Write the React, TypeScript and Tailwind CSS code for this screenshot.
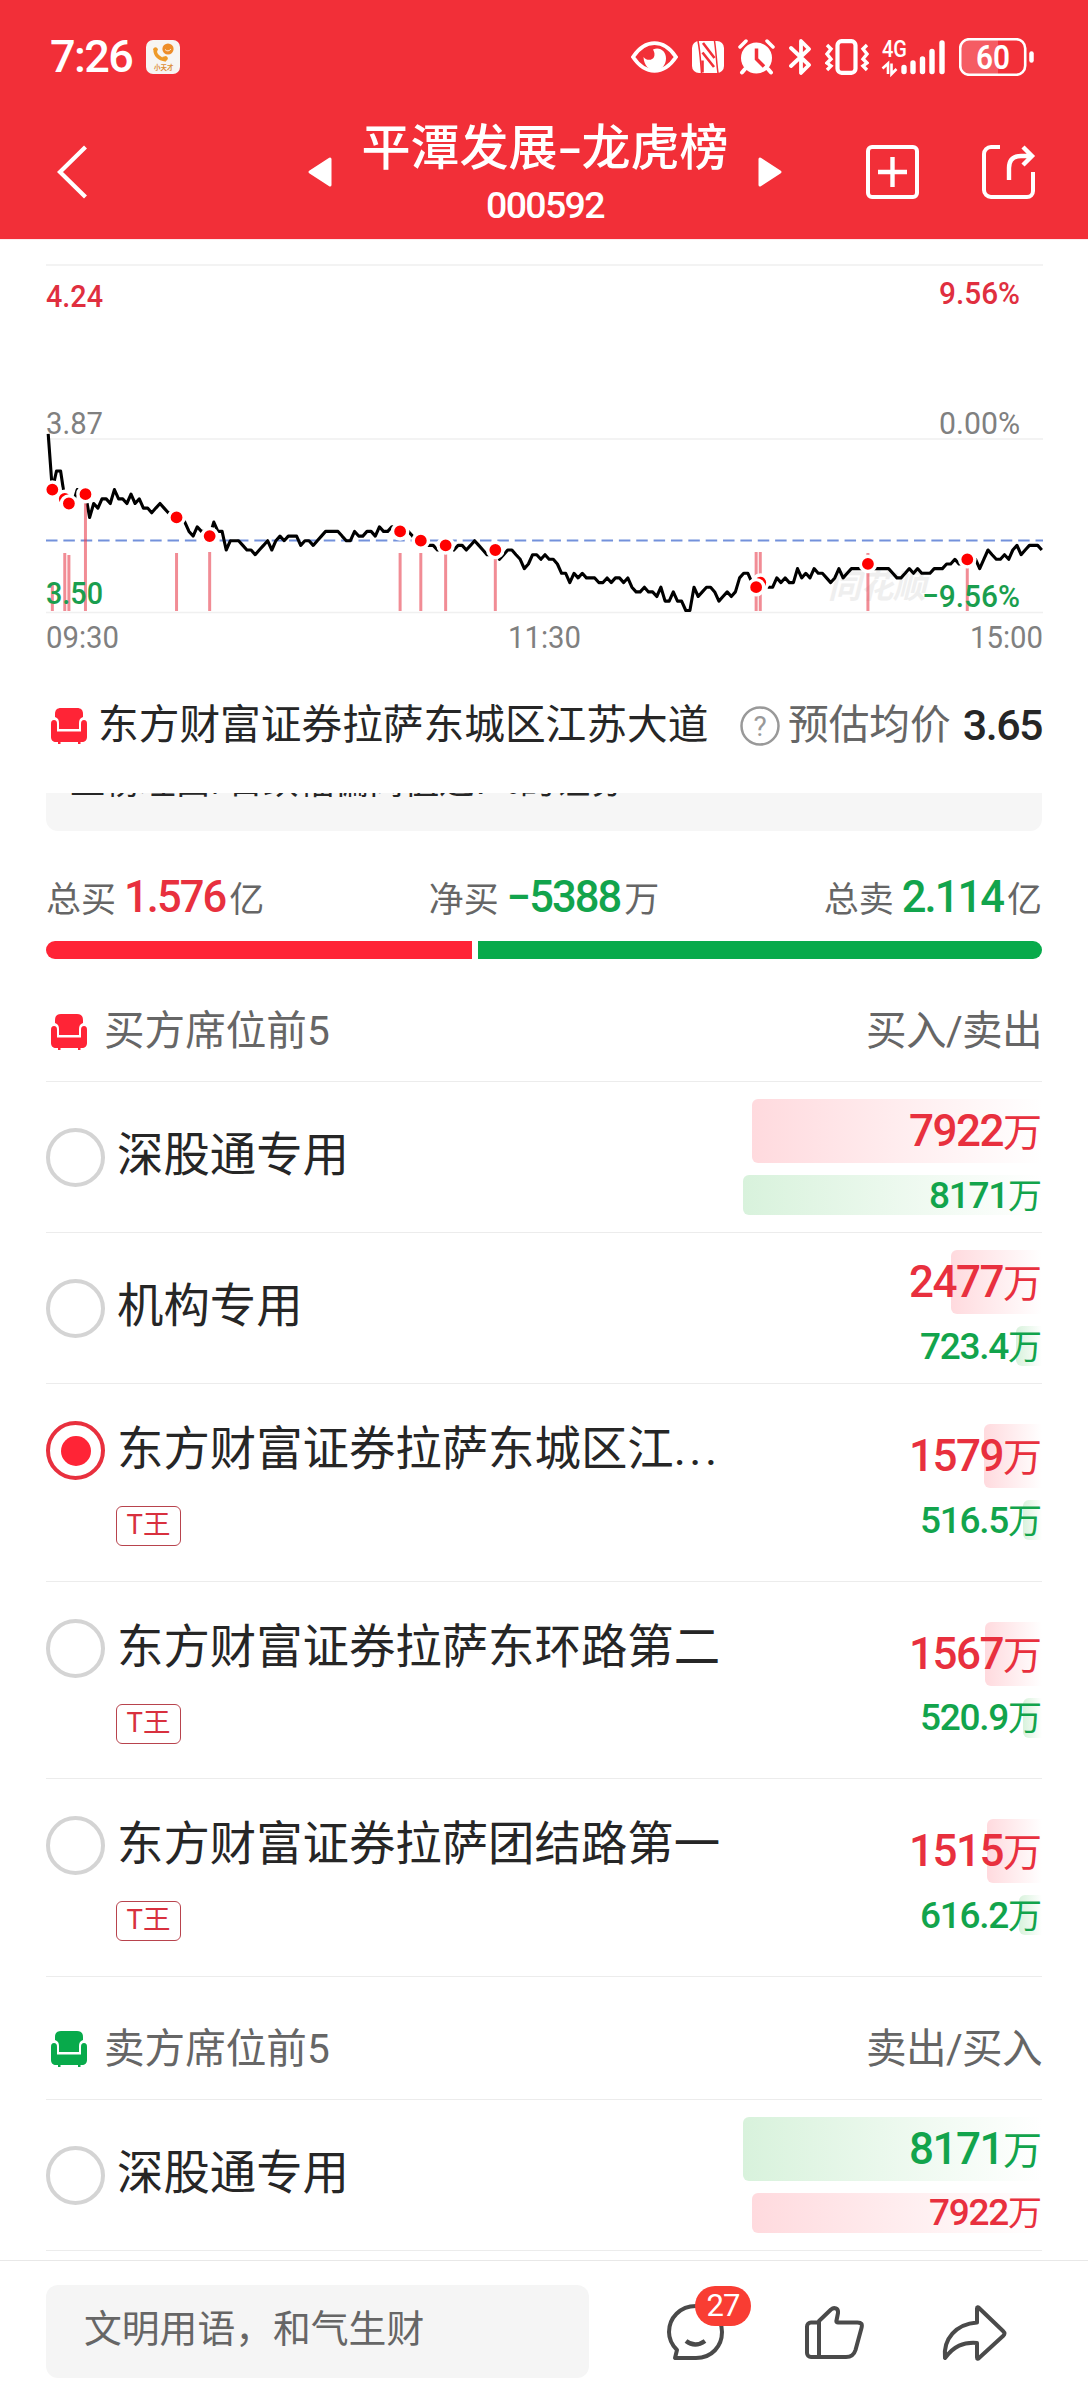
import clsx from "clsx";

type Seat = {
  name: string;
  top: number;
  bottom: number;
  topText: string;
  bottomText: string;
  tag?: string;
  more?: boolean;
  selected?: boolean;
};

const BUY_SEATS: Seat[] = [
  { name: "深股通专用", top: 7922, bottom: 8171, topText: "7922", bottomText: "8171" },
  { name: "机构专用", top: 2477, bottom: 723.4, topText: "2477", bottomText: "723.4" },
  {
    name: "东方财富证券拉萨东城区江",
    top: 1579,
    bottom: 516.5,
    topText: "1579",
    bottomText: "516.5",
    tag: "T王",
    more: true,
    selected: true,
  },
  { name: "东方财富证券拉萨东环路第二", top: 1567, bottom: 520.9, topText: "1567", bottomText: "520.9", tag: "T王" },
  { name: "东方财富证券拉萨团结路第一", top: 1515, bottom: 616.2, topText: "1515", bottomText: "616.2", tag: "T王" },
];

const SELL_SEATS: Seat[] = [
  { name: "深股通专用", top: 8171, bottom: 7922, topText: "8171", bottomText: "7922" },
];

const MAX_AMOUNT = 8171;
const MAX_BAR = 299;

// one value per minute, in cents below the previous close of 3.87
const TICKS = [
  -1, 11, 7, 7, 13, 14, 14, 11, 11, 12, 17, 14, 15, 13, 13, 14, 11, 13, 13, 14, 12, 14, 13, 15, 15, 16, 15, 14, 15, 16,
  16, 17, 17, 18, 20, 21, 19, 20, 20, 21, 18, 20, 20, 24, 22, 22, 22, 23, 24, 24, 25, 24, 23, 22, 24, 22, 21, 22, 21, 21,
  21, 23, 22, 22, 23, 22, 21, 20, 20, 20, 20, 21, 22, 22, 20, 21, 21, 20, 20, 21, 19, 20, 20, 19, 19, 20, 20, 20, 21, 22,
  22, 23, 23, 23, 24, 24, 23, 23, 24, 23, 23, 24, 23, 22, 23, 24, 25, 25, 24, 26, 25, 24, 24, 25, 26, 28, 27, 25, 25, 26,
  25, 26, 26, 27, 29, 29, 31, 29, 30, 29, 30, 30, 30, 31, 31, 30, 31, 30, 30, 31, 30, 32, 33, 33, 32, 33, 33, 34, 32, 35,
  35, 33, 35, 35, 37, 37, 32, 34, 33, 32, 32, 33, 35, 34, 33, 34, 33, 30, 29, 29, 31, 32, 31, 31, 32, 32, 30, 31, 30, 31,
  31, 28, 30, 29, 30, 28, 29, 29, 30, 31, 30, 28, 30, 29, 28, 28, 28, 28, 27, 28, 28, 28, 28, 28, 29, 30, 30, 29, 28, 29,
  28, 29, 29, 29, 28, 28, 28, 27, 27, 26, 27, 27, 26, 26, 26, 28, 26, 24, 25, 26, 26, 25, 26, 24, 23, 25, 24, 23, 23, 23,
  24,
];

const MARKS = [
  { at: 1, top: 343 },
  { at: 4, top: 313 },
  { at: 5, top: 315 },
  { at: 9, top: 250 },
  { at: 31, top: 313 },
  { at: 39, top: 312 },
  { at: 85, top: 313 },
  { at: 90, top: 313 },
  { at: 96, top: 314 },
  { at: 108, top: 318 },
  { at: 172, top: 312 },
  { at: 171, top: 312 },
  { at: 198, top: 313 },
  { at: 222, top: 318 },
];

const px = (i: number) => 48.2 + i * 4.14;
const py = (n: number) => 198.4 + n * 4.65;

function StatusBar() {
  return (
    <div className="flex h-[113px] items-center pl-[50px] pr-[53px] text-white">
      <span className="text-[45px] font-medium leading-none tracking-[-0.035em]">7:26</span>
      <svg className="ml-3.5" width="34" height="34" viewBox="0 0 34 34">
        <rect width="34" height="34" rx="7" fill="#f7f5f3" />
        <circle cx="22" cy="9" r="5.6" fill="#ee8d2a" />
        <path d="M19 9.5q3 3 6-.5" stroke="#fff" strokeWidth="0.8" fill="none" />
        <path d="M9 9c0 6 4 10 11 11" stroke="#ee9a2a" strokeWidth="3.4" fill="none" />
        <path d="M7 9.500c1-3 4-3 5 0l-1 2M16 17l4-1c2 1 3 3 0 5" fill="#ee9a2a" />
        <text x="8" y="29.500" fontSize="6.500" fontWeight="700" fill="#dc8d35">
          小天才
        </text>
      </svg>

      <div className="ml-auto flex items-center">
        <svg width="47" height="32" viewBox="0 0 47 32" fill="none">
          <path d="M2 16C8 7 15 2.200 23.500 2.200S39 7 45 16c-6 9-13 13.800-21.500 13.800S8 25 2 16Z" stroke="#fff" strokeWidth="3.800" />
          <path d="M22 8.500c7-3 13 2 13 9 0 7-5 11.500-11 11.500S13 25 12.500 16c3 4 9 3.500 10.500 0 1-2.500.5-5-1-7.500Z" fill="#fff" />
        </svg>
        <svg className="ml-3.5" width="32" height="34" viewBox="0 0 32 34" fill="none">
          <rect y="1" width="32" height="32" rx="7" fill="#fff" />
          <path d="M6 1c2 9 2.500 20 3.500 32M22.500 1c1.500 9 2 22 3.500 32" stroke="#f22f38" strokeWidth="1.500" />
          <path d="M11 3l11.500 15M10.500 12.500L22 27M10.500 20.500v12" stroke="#f22f38" strokeWidth="2.600" />
        </svg>
        <svg className="ml-3.5" width="37" height="36" viewBox="0 0 37 36" fill="none">
          <circle cx="18.500" cy="19" r="15.500" fill="#fff" />
          <path d="M2 8l6-6M35 8l-6-6" stroke="#fff" strokeWidth="3.500" strokeLinecap="round" />
          <path d="M7 30l-3 3.500M30 30l3 3.500" stroke="#fff" strokeWidth="4" strokeLinecap="round" />
          <path d="M18.500 9.500V20l7.500 7.500" stroke="#f22f38" strokeWidth="3.500" />
        </svg>
        <svg className="ml-3.5" width="23" height="36" viewBox="0 0 23 36" fill="none">
          <path d="M2 9l18 17-8 8V2l8 8L2 27" stroke="#fff" strokeWidth="3.800" strokeLinejoin="round" strokeLinecap="round" />
        </svg>
        <svg className="ml-[13px]" width="44" height="36" viewBox="0 0 44 36" fill="none">
          <rect x="12.500" y="2.200" width="18" height="31.600" rx="4" stroke="#fff" strokeWidth="4.200" />
          <path d="M2 6l4 4-4 5 4 5-4 4 4 3-4 4M42 6l-4 4 4 5-4 5 4 4-4 3 4 4" stroke="#fff" strokeWidth="3.400" />
        </svg>
        <svg className="ml-[13px] overflow-visible" width="64" height="36" viewBox="0 0 64 36" fill="none">
          <text x="0" y="18" fontSize="23" fontWeight="500" fill="#fff" textLength="25" lengthAdjust="spacingAndGlyphs">
            4G
          </text>
          <path d="M6 35V24.500L.5 29.500M9.500 24.500V35l5-5" stroke="#fff" strokeWidth="2.600" />
          <path d="M22 28.500v4M31 24v8.500M40.500 20v12.500M50 12.500v20M60 4v28.500" stroke="#fff" strokeWidth="5.400" strokeLinecap="round" />
        </svg>
        <svg className="ml-[13px]" width="76" height="38" viewBox="0 0 76 38" fill="none">
          <path d="M10 2h29v34H10a8 8 0 0 1-8-8V10a8 8 0 0 1 8-8Z" fill="#fff" fillOpacity=".22" />
          <rect x="1.200" y="1.200" width="65" height="35.600" rx="9" stroke="#fff" strokeWidth="2.600" />
          <path d="M72.500 15.500v7" stroke="#fff" strokeWidth="4.500" strokeLinecap="round" />
          <text x="17" y="30.500" fontSize="33" fontWeight="600" fill="#fff" textLength="34" lengthAdjust="spacingAndGlyphs">
            60
          </text>
        </svg>
      </div>
    </div>
  );
}

function NavBar() {
  return (
    <div className="flex h-[118px] items-center pl-14 pr-[52px] text-white">
      <svg width="32" height="56" viewBox="0 0 32 56" fill="none">
        <path d="M29.500 3L4 28l25.500 25" stroke="#fff" strokeWidth="4.200" />
      </svg>
      <svg className="ml-[220px]" width="24" height="30" viewBox="0 0 24 30">
        <path d="M22 2v26L2 15Z" fill="#fff" stroke="#fff" strokeWidth="3" strokeLinejoin="round" />
      </svg>
      <div className="flex h-[118px] w-[426px] flex-col items-center">
        <div className="flex h-[70px] items-center text-[49px] font-medium leading-none">
          平潭发展<span className="w-6 scale-x-150 text-center">-</span>龙虎榜
        </div>
        <div className="text-[37.500px] font-medium leading-[44px] tracking-[-0.045em]">000592</div>
      </div>
      <svg width="24" height="30" viewBox="0 0 24 30">
        <path d="M2 2v26l20-13Z" fill="#fff" stroke="#fff" strokeWidth="3" strokeLinejoin="round" />
      </svg>
      <svg className="ml-auto" width="54" height="54" viewBox="0 0 54 54" fill="none">
        <rect x="2" y="2" width="49" height="50" rx="4" stroke="#fff" strokeWidth="4" />
        <path d="M26.500 12v30M12 27h29" stroke="#fff" strokeWidth="4.400" />
      </svg>
      <svg className="ml-[62px]" width="54" height="54" viewBox="0 0 54 54" fill="none">
        <path d="M18 2H9a7 7 0 0 0-7 7v36a7 7 0 0 0 7 7h36a6 6 0 0 0 6-6V27" stroke="#fff" strokeWidth="4" />
        <path d="M27 35V23c0-8 4-12 12-12h10M41 2l9 9-9 9" stroke="#fff" strokeWidth="4.400" />
      </svg>
    </div>
  );
}

function PriceChart() {
  const line = TICKS.map((n, i) => `${px(i).toFixed(1)},${py(n).toFixed(1)}`).join(" ");
  return (
    <svg className="block" width="1088" height="420" viewBox="0 0 1088 420" fontSize="32">
      <path d="M46 25h997M46 199h997M46 372.500h997" stroke="#f0f0f0" strokeWidth="1.500" />
      <text x="828" y="358" fontSize="33" fontWeight="700" fontStyle="italic" fill="#efefef" textLength="98">
        同花顺
      </text>
      <path d="M46 300.500h997" stroke="#7391db" strokeWidth="2.200" strokeDasharray="11.500 5.860" />
      <polyline points={line} fill="none" stroke="#000" strokeWidth="3.100" strokeLinejoin="round" />
      {MARKS.map((m) => (
        <path key={m.at} d={`M${px(m.at)} ${m.top}V371`} stroke="#e8404e" strokeOpacity=".6" strokeWidth="3" />
      ))}
      {MARKS.map((m) => (
        <circle key={m.at} cx={px(m.at)} cy={py(TICKS[m.at])} r="7.600" fill="#f00" stroke="#fff" strokeWidth="3.400" />
      ))}
      <g fill="#e02f3f" fontWeight="500">
        <text x="46" y="67" textLength="57" lengthAdjust="spacingAndGlyphs">4.24</text>
        <text x="939" y="64" textLength="81" lengthAdjust="spacingAndGlyphs">9.56%</text>
      </g>
      <g fill="#808080">
        <text x="46" y="194" textLength="57" lengthAdjust="spacingAndGlyphs">3.87</text>
        <text x="939" y="194" textLength="81" lengthAdjust="spacingAndGlyphs">0.00%</text>
        <text x="46" y="408" textLength="73" lengthAdjust="spacingAndGlyphs">09:30</text>
        <text x="508" y="408" textLength="73" lengthAdjust="spacingAndGlyphs">11:30</text>
        <text x="970" y="408" textLength="73" lengthAdjust="spacingAndGlyphs">15:00</text>
      </g>
      <g fill="#1a9e4e" fontWeight="500">
        <text x="46" y="364" textLength="57" lengthAdjust="spacingAndGlyphs">3.50</text>
        <text x="922" y="367" textLength="98" lengthAdjust="spacingAndGlyphs">−9.56%</text>
      </g>
    </svg>
  );
}

function SofaIcon({ className }: { className?: string }) {
  return (
    <svg className={className} width="38" height="38" viewBox="0 0 38 38" fill="currentColor">
      <path d="M5 10V7c0-4 2-6 6-6h16c4 0 6 2 6 6v3c-3 1-4 3-4 6v6H9v-6c0-3-1-5-4-6Z" />
      <path d="M1 17c0-3 1-4 3-4s3 1 3 4v7.500h24V17c0-3 1-4 3-4s3 1 3 4v13c0 3-2 5-5 5H6c-3 0-5-2-5-5Z" />
      <path d="M8 34h2.500v3H8zM28 34h2.500v3H28z" />
    </svg>
  );
}

function SeatTitle() {
  return (
    <div className="flex h-[133px] items-center pb-0.5 pl-[50px] pr-[46px] text-[40.700px] text-[#262626]">
      <SofaIcon className="text-[#ff2436]" />
      <span className="ml-2.5">东方财富证券拉萨东城区江苏大道</span>
      <svg className="ml-auto" width="40" height="40" viewBox="0 0 40 40" fill="none">
        <circle cx="20" cy="20" r="18.500" stroke="#999" strokeWidth="2.500" />
        <text x="20" y="30" fontSize="28" fill="#999" textAnchor="middle">
          ?
        </text>
      </svg>
      <span className="ml-2 text-[#666]">预估均价</span>
      <span className="ml-3 text-[43px] font-medium tracking-[-0.035em]">3.65</span>
    </div>
  );
}

function Total({ label, value, unit, color }: { label: string; value: string; unit: string; color: string }) {
  return (
    <div className="flex items-baseline text-[35px] text-[#666]">
      {label}
      <span className={clsx("ml-2 mr-1 text-[43.500px] font-medium tracking-[-0.045em]", color)}>{value}</span>
      {unit}
    </div>
  );
}

function Totals() {
  return (
    <div className="px-[46px]">
      <div className="flex h-[110px] items-end justify-between pb-[11px]">
        <Total label="总买" value="1.576" unit="亿" color="text-[#e8303e]" />
        <Total label="净买" value="−5388" unit="万" color="text-[#12a44c]" />
        <Total label="总卖" value="2.114" unit="亿" color="text-[#12a44c]" />
      </div>
      <div className="flex h-[18px] gap-1.5 overflow-hidden rounded-[9px]">
        <div className="w-[426px] bg-[#ff2436]" />
        <div className="flex-1 bg-[#08aa4b]" />
      </div>
    </div>
  );
}

function SectionHead({ title, columns, color }: { title: string; columns: string; color: string }) {
  return (
    <div className="flex items-center border-b border-[#ececec] pl-1 pt-[23px] text-[40.600px] text-[#666]">
      <SofaIcon className={color} />
      <span className="ml-4">{title}</span>
      <span className="ml-auto tracking-[-0.015em]">{columns}</span>
    </div>
  );
}

function Amount({ value, text, sell, big }: { value: number; text: string; sell: boolean; big?: boolean }) {
  return (
    <div className={clsx("relative flex w-full items-center justify-end", big ? "h-16" : "h-10")}>
      <div
        className={clsx(
          "absolute inset-y-0 right-0 rounded-l-md bg-linear-to-r",
          sell ? "from-[#d8f2dc] to-white" : "from-[#ffdade] to-white",
        )}
        style={{ width: (value / MAX_AMOUNT) * MAX_BAR }}
      />
      <div className={clsx("relative flex items-baseline leading-none", sell ? "text-[#12a44c]" : "text-[#e8303e]")}>
        <span className={clsx("font-medium tracking-[-0.035em]", big ? "text-[44px]" : "text-[37px]")}>{text}</span>
        <span className={big ? "text-[39px]" : "text-[34px]"}>万</span>
      </div>
    </div>
  );
}

function SeatRow({ seat, sellFirst }: { seat: Seat; sellFirst?: boolean }) {
  return (
    <div
      className={clsx(
        "flex items-center justify-between border-b border-[#ececec]",
        seat.tag ? "h-[197.500px]" : "h-[151px]",
      )}
    >
      <div className="flex h-full">
        <div
          className={clsx(
            "flex size-[59px] items-center justify-center rounded-full border-4",
            seat.tag ? "mt-[37px]" : "mt-[46px]",
            seat.selected ? "border-[#e8303e]" : "border-[#d4d4d4]",
          )}
        >
          {seat.selected && <div className="size-[30px] rounded-full bg-[#ff2436]" />}
        </div>
        <div className={clsx("ml-3", seat.tag ? "mt-[35px]" : "mt-[43px]")}>
          <div className="text-[46.400px] leading-[60px] text-[#262626]">
            {seat.name}
            {seat.more && <span className="tracking-[3.400px]">...</span>}
          </div>
          {seat.tag && (
            <div className="ml-[-1px] mt-[27px] flex h-10 w-[65px] items-center justify-center rounded-md border border-[#b8434d] pb-0.5 text-[27.500px] leading-none text-[#d8303e]">
              {seat.tag}
            </div>
          )}
        </div>
      </div>
      <div className="flex w-[299px] flex-col items-end gap-3">
        <Amount value={seat.top} text={seat.topText} sell={!!sellFirst} big />
        <Amount value={seat.bottom} text={seat.bottomText} sell={!sellFirst} />
      </div>
    </div>
  );
}

function BottomBar() {
  return (
    <div className="flex flex-1 items-start border-t border-[#e8e8e8] bg-white pl-[46px] pt-6">
      <div className="flex h-[93px] w-[543px] items-center rounded-xl bg-[#f5f5f5] pb-1 pl-[38px] text-[37.800px] text-[#666]">
        文明用语，和气生财
      </div>
      <div className="relative ml-[77px] mt-[18px]">
        <svg width="58" height="58" viewBox="0 0 58 58" fill="none" stroke="#4a4a4a" strokeWidth="4">
          <path d="M30 3C14 3 3 15 3 29c0 8 3 13 8 18L9 55h21c16 0 26-12 26-26S45 3 30 3Z" strokeLinejoin="round" />
          <path d="M20 38q9 7 19 0" strokeWidth="4.500" />
        </svg>
        <div className="absolute left-[29px] top-[-17px] flex h-10 w-14 items-center justify-center rounded-full bg-[#f93d33] text-[31px] leading-none tracking-[-0.03em] text-white">
          27
        </div>
      </div>
      <svg className="ml-[80px] mt-5" width="60" height="56" viewBox="0 0 60 56" fill="none" stroke="#4a4a4a" strokeWidth="4" strokeLinejoin="round">
        <path d="M15 17.500H7a4 4 0 0 0-4 4V48a4 4 0 0 0 4 4h35c5 0 8-2 9.500-7l6-22c1-4 0-5.500-4-5.500H34c-1 0-2-.5-1.500-2L34 8c.5-5-4-6-7-3.500L15 16V52" />
      </svg>
      <svg className="ml-[77px] mt-[19px]" width="66" height="58" viewBox="0 0 66 58" fill="none" stroke="#4a4a4a" strokeWidth="4" strokeLinejoin="round">
        <path d="M36 4.500c0-1.500 1-1.500 2-.5l24 23c2 2 2 3 0 5L38 54c-1 1-2 1-2-.5V39C22 38 13 42 4 54 2 35 15 20 36 18.500Z" />
      </svg>
    </div>
  );
}

export default function App() {
  return (
    <div className="flex h-[2400px] w-[1088px] flex-col overflow-hidden bg-white font-[Roboto,'Noto_Sans_CJK_SC',sans-serif]">
      <div className="h-[239px] shrink-0 bg-[#f22f38]">
        <StatusBar />
        <NavBar />
      </div>
      <div className="h-px shrink-0 bg-[#fdeaec]" />
      <PriceChart />
      <SeatTitle />
      <div className="mx-[46px] flex h-[38px] shrink-0 items-end overflow-hidden rounded-b-xl bg-[#f6f6f6]">
        <div className="pb-[24px] pl-6 text-[35.200px] leading-[50px] text-[#262626]">上榜理由: 日跌幅偏离值达7%的证券</div>
      </div>
      <Totals />
      <div className="grid shrink-0 grid-rows-[123px] px-[46px]">
        <SectionHead title="买方席位前5" columns="买入/卖出" color="text-[#ff2436]" />
        {BUY_SEATS.map((seat) => (
          <SeatRow key={seat.name} seat={seat} />
        ))}
      </div>
      <div className="grid shrink-0 grid-rows-[123px] px-[46px]">
        <SectionHead title="卖方席位前5" columns="卖出/买入" color="text-[#08aa4b]" />
        {SELL_SEATS.map((seat) => (
          <SeatRow key={seat.name} seat={seat} sellFirst />
        ))}
      </div>
      <div className="h-[9px] shrink-0" />
      <BottomBar />
    </div>
  );
}
